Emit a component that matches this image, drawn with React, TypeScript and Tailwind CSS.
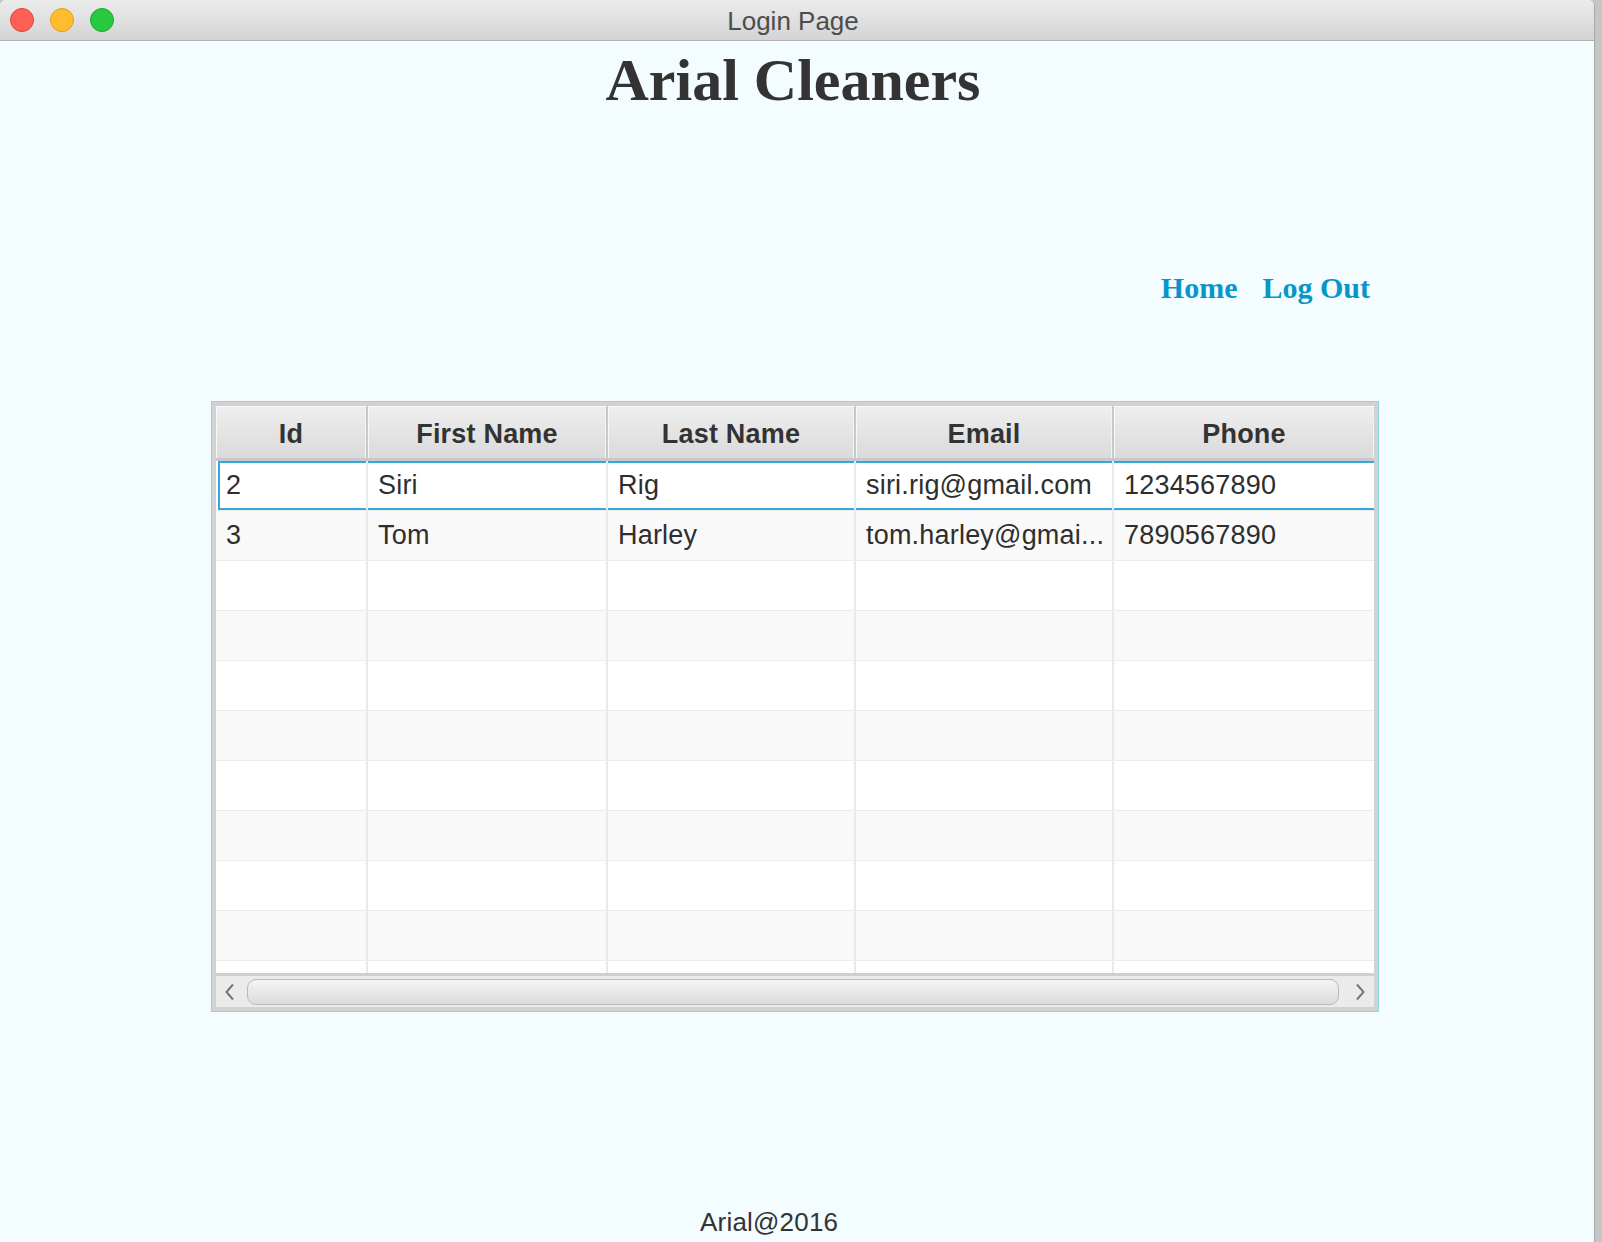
const sans = "font-['Liberation_Sans',Arial,sans-serif]";
const serif = "font-['Liberation_Serif','Times_New_Roman',serif]";

const columns = [
  { title: "Id", width: "w-[152px]" },
  { title: "First Name", width: "w-[240px]" },
  { title: "Last Name", width: "w-[248px]" },
  { title: "Email", width: "w-[258px]" },
  { title: "Phone", width: "w-[260px]" },
];

const customers = [
  ["2", "Siri", "Rig", "siri.rig@gmail.com", "1234567890"],
  ["3", "Tom", "Harley", "tom.harley@gmai...", "7890567890"],
];

const Chevron = ({ dir }: { dir: "left" | "right" }) => (
  <svg width="12" height="18" viewBox="0 0 12 18" fill="none">
    <path
      d={dir === "left" ? "M9 1.5 L2.5 9 L9 16.5" : "M3 1.5 L9.5 9 L3 16.5"}
      stroke="#777777"
      strokeWidth="2"
      strokeLinejoin="round"
    />
  </svg>
);

const App = () => {
  // 10 full rows plus one that the scrollbar cuts off
  const rows = Array.from({ length: 11 }, (_, i) => customers[i] ?? null);

  return (
    <div className={`w-[1602px] h-[1242px] bg-[#c6c6c6] flex ${sans}`}>
      <div className="w-[1595px] h-full bg-[#f3fcfe] rounded-t-[6px] overflow-hidden border-r border-[#a9a9a9] flex flex-col">
        {/* Title bar */}
        <div className="relative h-[41px] shrink-0 bg-gradient-to-b from-[#ececec] to-[#d4d4d4] border-b border-[#b1b1b1] flex items-center justify-center">
          <div className="absolute left-[10px] top-[8px] flex gap-[16px]">
            <span className="w-[24px] h-[24px] rounded-full bg-[#fe5f57] border border-[#e0443e]" />
            <span className="w-[24px] h-[24px] rounded-full bg-[#febc2e] border border-[#dea123]" />
            <span className="w-[24px] h-[24px] rounded-full bg-[#28c840] border border-[#1aab29]" />
          </div>
          <span className="text-[26px] leading-none text-[#4d4d4d] pt-[1px] pr-[8px]">Login Page</span>
        </div>

        {/* Heading */}
        <h1 className={`mt-[9px] pr-[8px] text-center text-[60px] leading-[60px] font-bold text-[#333333] ${serif}`}>
          Arial Cleaners
        </h1>

        {/* Nav links */}
        <div className={`mt-[163px] pr-[224px] flex justify-end gap-[25px] text-[30px] leading-[30px] font-bold text-[#0896c9] ${serif}`}>
          <a href="#">Home</a>
          <a href="#">Log Out</a>
        </div>

        {/* Table */}
        <div className="mt-[98px] ml-[211px] w-[1168px] h-[611px] border border-[#8cd3ee]">
          <div className="w-full h-full border-4 border-[#d2d2d2] bg-white flex flex-col">
            {/* Header */}
            <div className="h-[55px] shrink-0 flex border-b-[3px] border-[#c9c9c9] bg-[#f4f4f4]">
              {columns.map((col) => (
                <div
                  key={col.title}
                  className={`${col.width} h-full flex items-center justify-center pt-[5px] border-r-2 border-[#c8c8c8] bg-gradient-to-b from-[#efefef] to-[#dadada] shadow-[inset_1px_1px_0_#f8f8f8,inset_-1px_0_0_#f3f3f3] text-[27px] font-bold text-[#333333] tracking-[0.2px] last:border-r-0`}
                >
                  {col.title}
                </div>
              ))}
            </div>

            {/* Rows */}
            <div className="flex-1 overflow-hidden">
              {rows.map((row, i) => (
                <div
                  key={i}
                  className={`h-[50px] flex border-b border-[#ececec] ${i % 2 === 0 ? "bg-white" : "bg-[#f9f9f9]"}`}
                >
                  {columns.map((col, j) => (
                    <div
                      key={col.title}
                      className={`${col.width} h-full flex items-center pl-[10px] border-r-2 border-[#e9e9e9] last:border-r-0 text-[27px] text-[#2e2e2e] tracking-[0.2px] whitespace-nowrap overflow-hidden ${
                        i === 0
                          ? j === 0
                            ? "shadow-[inset_2px_0_0_#ffffff,inset_4px_0_0_#36a7d9,inset_0_2px_0_#36a7d9,inset_0_-2px_0_#36a7d9]"
                            : "shadow-[inset_0_2px_0_#36a7d9,inset_0_-2px_0_#36a7d9]"
                          : ""
                      }`}
                    >
                      {row ? row[j] : ""}
                    </div>
                  ))}
                </div>
              ))}
            </div>

            {/* Horizontal scrollbar */}
            <div className="h-[34px] shrink-0 flex items-center bg-[#ebebeb] border-t-[3px] border-[#cfcfcf]">
              <div className="w-[31px] flex justify-center pr-[4px]">
                <Chevron dir="left" />
              </div>
              <div className="flex-1 h-[26px] rounded-[9px] border border-[#b9b9b9] bg-gradient-to-b from-[#f4f4f4] to-[#dcdcdc]" />
              <div className="w-[35px] flex justify-center pl-[6px]">
                <Chevron dir="right" />
              </div>
            </div>
          </div>
        </div>

        {/* Footer */}
        <p className="mt-[197px] ml-[700px] text-[26px] leading-[26px] text-[#333333] tracking-[0.2px]">Arial@2016</p>
      </div>
    </div>
  );
};

export default App;
